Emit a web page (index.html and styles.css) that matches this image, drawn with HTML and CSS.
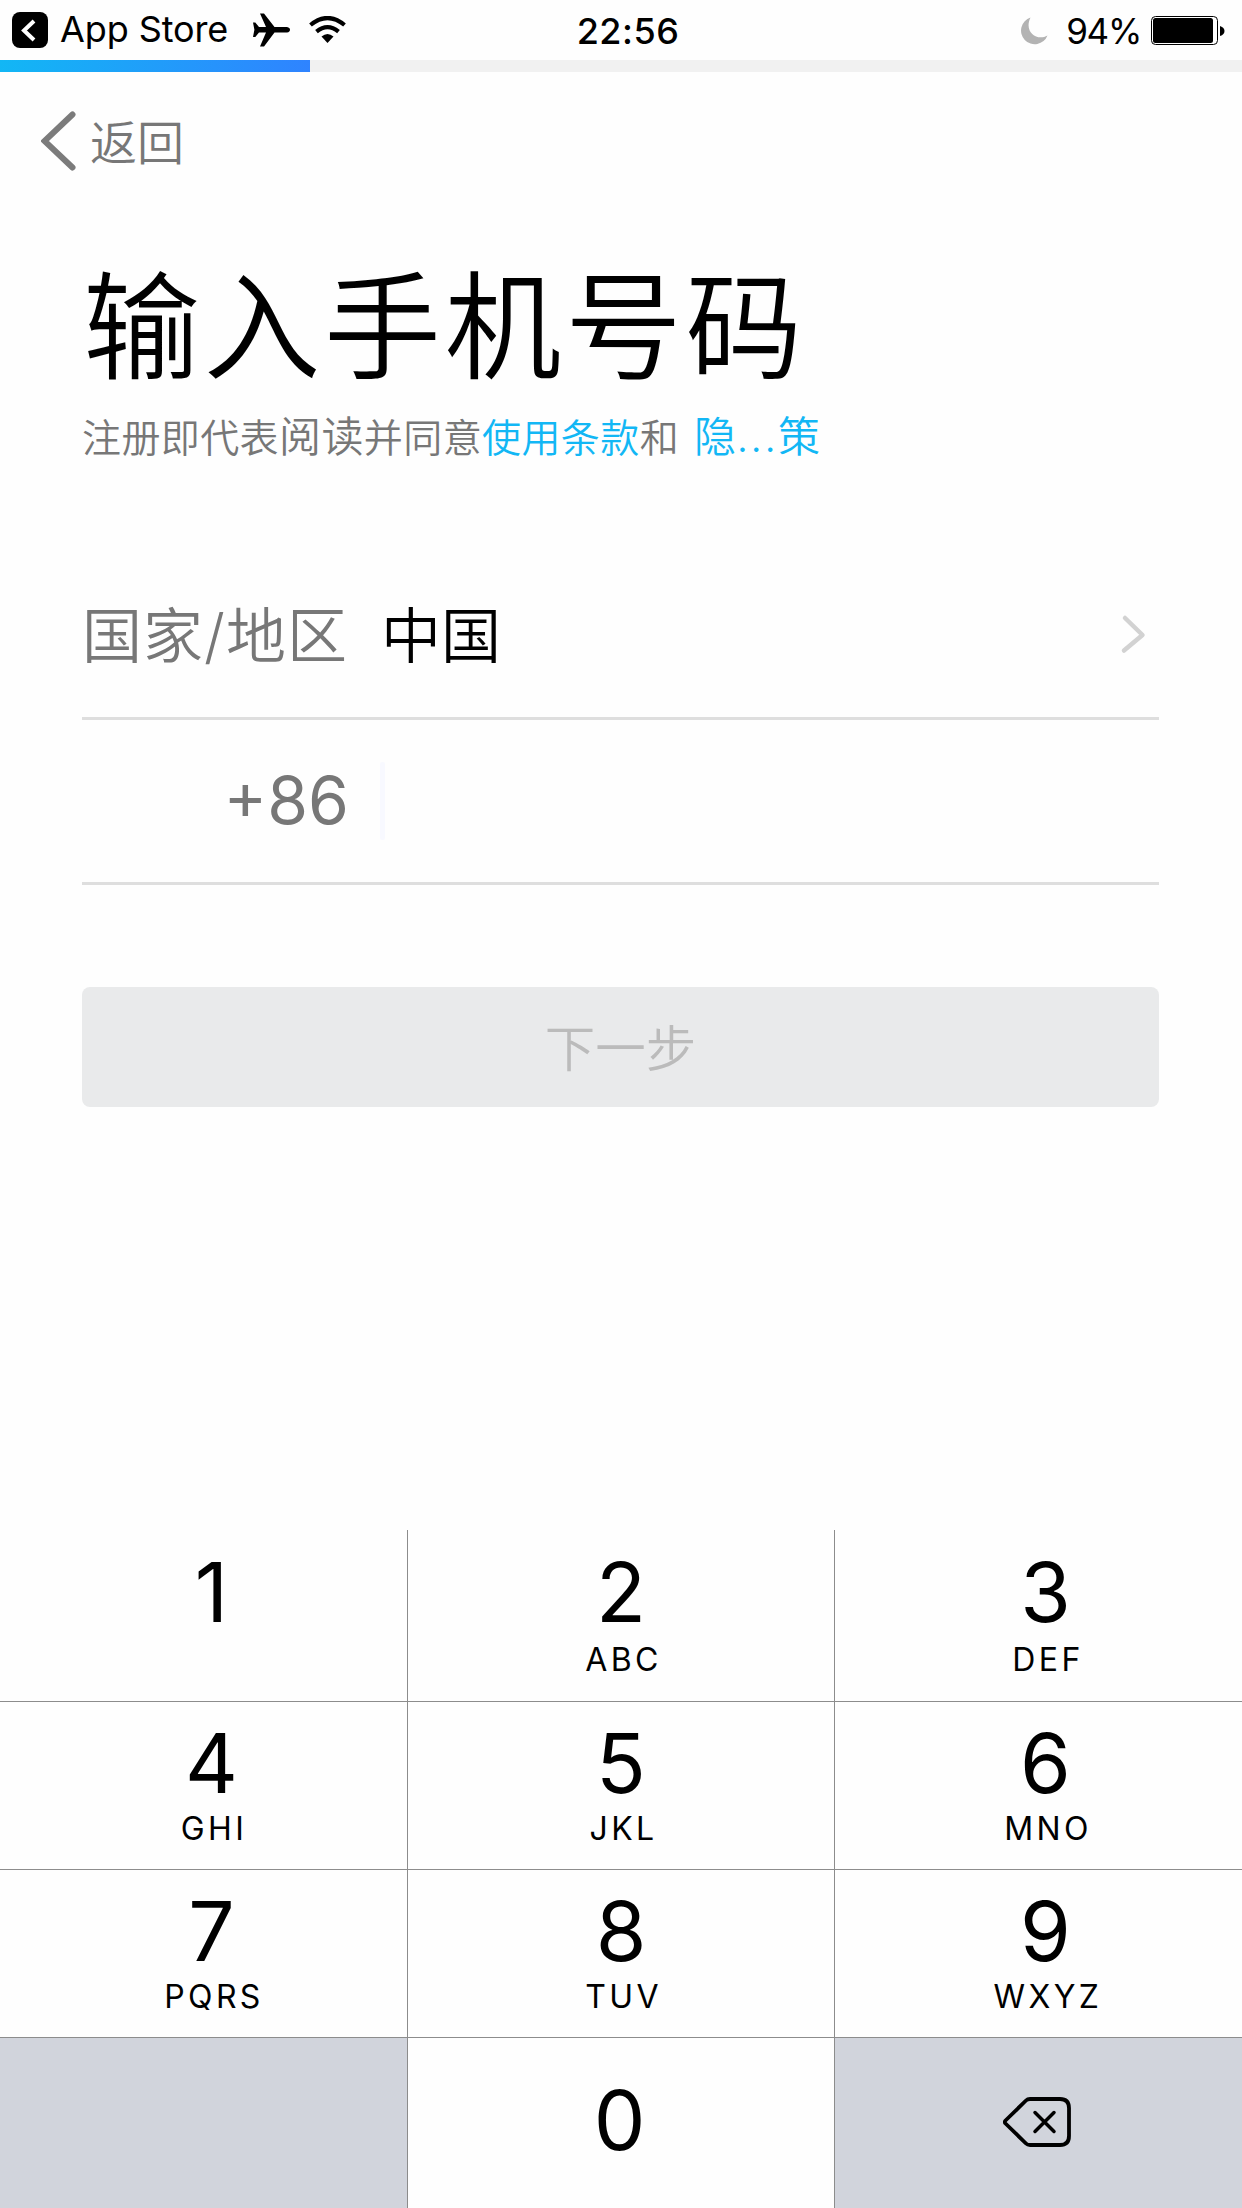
FILE: index.html
```
<!DOCTYPE html>
<html lang="zh-CN">
<head>
    <meta charset="UTF-8">
    <meta name="viewport" content="width=device-width, initial-scale=1">
    <title>输入手机号码</title>
    <link rel="stylesheet" href="styles.css">
</head>
<body>

    <!-- Status Bar -->
    <header class="status-bar">
        <div class="status-left">
            <svg class="app-icon" width="36" height="36" viewBox="0 0 36 36">
                <rect width="36" height="36" rx="8" fill="#000"/>
                <path d="M22 9 L12 18.5 L22 28" fill="none" stroke="#fff" stroke-width="4"/>
            </svg>
            <span class="app-name">App Store</span>
            <svg class="plane" width="37" height="34" viewBox="0 0 37 34">
                <path d="M0 9.5h2.3L6 14h7L7 .5h4L21.5 14H34q3 .6 3 2.8t-3 2.8H21.5L11 33.5H7L13 19.6H6L2.3 24H0L1.4 16.8z" fill="#000"/>
            </svg>
            <svg class="wifi" width="37" height="27" viewBox="0 0 37 27">
                <g fill="none" stroke="#000" stroke-width="4.2">
                    <path d="M1.5 9Q18.500 -5 35.500 9"/>
                    <path d="M7.500 15.600Q18.500 6.600 29.500 15.600"/>
                </g>
                <path d="M12.500 20.500Q18.500 15.500 24.500 20.500L18.500 27z" fill="#000"/>
            </svg>
        </div>
        <div class="time">22:56</div>
        <div class="status-right">
            <svg class="moon" width="28" height="28" viewBox="0 0 28 28">
                <path d="M10.500 .5A13.700 13.700 0 1 0 27.500 18.500C17 24.500 3.500 15 10.500 .5z" fill="#b3b3b3"/>
            </svg>
            <span class="percent">94%</span>
            <svg class="battery" width="74" height="29" viewBox="0 0 74 29">
                <rect x=".5" y=".5" width="66" height="28" rx="4" fill="#fff" stroke="#000"/>
                <rect x="2" y="2" width="60" height="25" rx="2.500" fill="#000"/>
                <path d="M69 10q4.500 1.500 4.500 5t-4.500 5z" fill="#000"/>
            </svg>
        </div>
    </header>

    <!-- Progress -->
    <div class="progress"><div class="progress-fill"></div></div>

    <!-- Back Link -->
    <nav>
        <svg width="35" height="60" viewBox="0 0 35 60">
            <path d="M31.500 3.500L3.500 30L31.500 56.500" fill="none" stroke="#7b7b7b" stroke-width="6" stroke-linecap="round"/>
        </svg>
        <span>返回</span>
    </nav>

    <!-- Phone Form -->
    <main>
        <h1>输入手机号码</h1>
        <p class="terms">注册即代表<span class="read">阅读</span>并同意<a>使用条款</a>和<a class="privacy">隐<span class="dots">...</span>策</a></p>

        <div class="row country">
            <span class="label">国家/地区</span>
            <span class="value">中国</span>
            <svg class="arrow" width="26" height="40" viewBox="0 0 26 40">
                <path d="M5 4L22.500 21L4 36.500" fill="none" stroke="#d2d2d2" stroke-width="4.500" stroke-linecap="round" stroke-linejoin="round"/>
            </svg>
        </div>
        <div class="row phone">
            <span class="code">+86</span>
            <span class="caret"></span>
        </div>

        <button class="next-btn">下一步</button>
    </main>

    <!-- Number Pad -->
    <section class="keypad">
        <div class="key">1</div>
        <div class="key">2<small>ABC</small></div>
        <div class="key">3<small>DEF</small></div>
        <div class="key">4<small>GHI</small></div>
        <div class="key">5<small>JKL</small></div>
        <div class="key">6<small>MNO</small></div>
        <div class="key">7<small>PQRS</small></div>
        <div class="key">8<small>TUV</small></div>
        <div class="key">9<small>WXYZ</small></div>
        <div class="key gray"></div>
        <div class="key zero">0</div>
        <div class="key gray delete">
            <svg width="68" height="50" viewBox="0 0 68 50" fill="none" stroke="#000" stroke-width="3.800" stroke-linecap="round" stroke-linejoin="round">
                <path d="M27 2H57Q66 2 66 11V39Q66 48 57 48H27Q24.500 48 23 46.500L2.500 26.500Q1.200 25 2.500 23.500L23 3.500Q24.500 2 27 2z"/>
                <path d="M32 15.500L51 34.500M51 15.500L32 34.500" stroke-width="3.500"/>
            </svg>
        </div>
    </section>

</body>
</html>
```
FILE: styles.css
```
/* General Styles */
* {
    box-sizing: border-box;
}

body {
    margin: 0;
    height: 2208px;
    display: flex;
    flex-direction: column;
    overflow: hidden;
    background: #fefefe;
    color: #000;
    font-family: Inter, "Noto Sans CJK SC", sans-serif;
}

svg {
    display: block;
    flex: none;
}

/* Status Bar */
.status-bar {
    height: 60px;
    padding: 0 17px 2px 12px;
    display: grid;
    grid-template-columns: 1fr auto 1fr;
    align-items: center;
    font-size: 36px;
    line-height: 56px;
}

.status-left,
.status-right {
    display: flex;
    align-items: center;
}

.app-name {
    width: 193px;
    padding: 0 0 2px 12px;
    letter-spacing: -0.1px;
}

.plane {
    margin-left: 12px;
}

.wifi {
    margin-left: 19px;
}

.time {
    padding: 2px 0 0 19px;
    font-weight: 550;
    letter-spacing: 0.5px;
}

.status-right {
    justify-content: flex-end;
    padding-top: 2px;
}

.moon {
    margin-right: 18px;
}

.percent {
    margin-right: 10px;
    padding-top: 1px;
    font-size: 35px;
    letter-spacing: -1.3px;
}

/* Progress */
.progress {
    height: 12px;
    background: #f1f1f1;
}

.progress-fill {
    width: 310px;
    height: 12px;
    background: linear-gradient(100deg, #12b7f5, #2f83ff);
}

/* Back Link */
nav {
    height: 138px;
    padding: 0 41px;
    display: flex;
    align-items: center;
    gap: 14px;
    color: #777;
    font-size: 47px;
    font-weight: 350;
}

nav span {
    padding-bottom: 4px;
}

/* Phone Form */
main {
    flex: 1;
    padding: 0 83px 0 82px;
}

h1 {
    margin: 48px 0 0 1px;
    font-size: 117px;
    font-weight: 350;
    line-height: 140px;
    letter-spacing: 3.5px;
}

.terms {
    margin: 9px 0 0;
    height: 60px;
    color: #777;
    font-size: 39px;
    font-weight: 350;
    line-height: 60px;
    letter-spacing: 0.4px;
    white-space: nowrap;
}

.terms a {
    color: #12b7f5;
}

.read {
    font-size: 42px;
}

.terms .privacy {
    margin-left: 15px;
    font-size: 42px;
}

.dots {
    letter-spacing: 2px;
}

.row {
    display: flex;
    align-items: center;
    border-bottom: 3px solid #dedede;
}

.country {
    height: 170px;
    margin-top: 83px;
    font-size: 60px;
    font-weight: 350;
}

.label,
.value {
    padding-bottom: 4px;
}

.label {
    width: 299px;
    color: #777;
    letter-spacing: 1px;
}

.arrow {
    margin-left: auto;
    margin-right: 13px;
}

.phone {
    height: 165px;
}

.code {
    width: 267px;
    padding-bottom: 2px;
    color: #777;
    font-size: 66px;
    text-align: right;
}

.caret {
    width: 5px;
    height: 78px;
    margin-left: 31px;
    border-radius: 2px;
    background: #f8f9ff;
}

.next-btn {
    display: block;
    width: 100%;
    height: 120px;
    margin-top: 102px;
    padding-bottom: 6px;
    border: none;
    border-radius: 8px;
    background: #e9eaeb;
    color: #bbb;
    font-family: inherit;
    font-size: 50.5px;
    font-weight: 350;
}

/* Number Pad */
.keypad {
    height: 678px;
    display: grid;
    grid-template-columns: 408px 427px 407px;
    grid-template-rows: 172px 168px 168px 170px;
}

.key {
    padding-top: 16px;
    border-right: 1px solid #8c8c8c;
    border-bottom: 1px solid #8c8c8c;
    font-size: 82px;
    line-height: 92px;
    text-align: center;
}

.key:nth-child(3n) {
    padding-left: 14px;
    border-right: none;
}

.key:nth-child(3n+1) {
    padding-left: 16px;
}

.key:nth-child(-n+3) {
    padding-top: 17px;
}

.key:nth-child(n+10) {
    border-bottom: none;
}

.key small {
    display: block;
    padding-left: 5px;
    font-size: 32px;
    line-height: 38px;
    letter-spacing: 3.4px;
}

.key:nth-child(-n+3) small {
    line-height: 41px;
}

.key.zero {
    padding-top: 37px;
    padding-right: 3px;
}

.key.gray {
    background: #d1d4dc;
}

.key.delete {
    display: flex;
    align-items: center;
    justify-content: center;
    padding: 0 4px 2px 0;
}
```
